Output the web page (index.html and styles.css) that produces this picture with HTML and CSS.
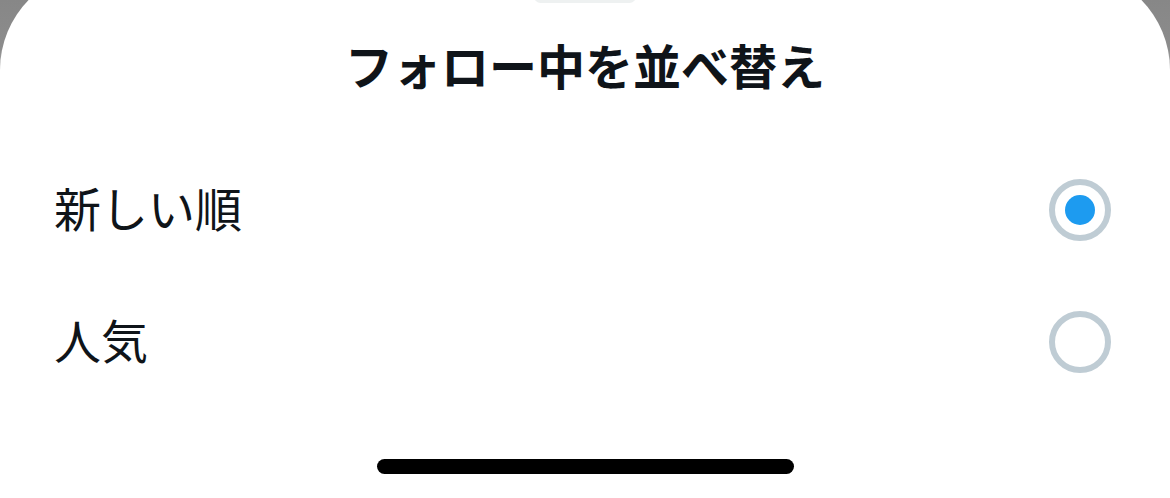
FILE: index.html
```html
<!DOCTYPE html>
<html lang="ja">
<head>
<meta charset="utf-8">
<title>フォロー中を並べ替え</title>
<link rel="stylesheet" href="styles.css">
</head>
<body>
<div class="sheet">
  <div class="handle"></div>
  <h1 class="title">フォロー中を並べ替え</h1>
  <ul class="options">
    <li class="option">
      <span class="label">新しい順</span>
      <span class="radio checked"><span class="dot"></span></span>
    </li>
    <li class="option">
      <span class="label">人気</span>
      <span class="radio"></span>
    </li>
  </ul>
  <div class="home-indicator"></div>
</div>
</body>
</html>
```
FILE: styles.css
```css
html, body {
  margin: 0;
  padding: 0;
}
body {
  width: 1170px;
  height: 498px;
  overflow: hidden;
  background: linear-gradient(to bottom, #878787 0px, #8c8c8c 50px, #ffffff 110px);
  font-family: "Noto Sans CJK JP", "Noto Sans", sans-serif;
  color: #0f1419;
}
.sheet {
  margin-top: -30px;
  height: 528px;
  background: #ffffff;
  border-radius: 100px 100px 0 0;
  display: flex;
  flex-direction: column;
  align-items: stretch;
}
.handle {
  align-self: center;
  margin-top: 20px;
  width: 102px;
  height: 13px;
  border-radius: 7px;
  background: #eef1f1;
}
.title {
  margin: 31px 0 0;
  height: 60px;
  line-height: 60px;
  font-size: 48px;
  font-weight: 700;
  text-align: center;
}
.options {
  list-style: none;
  margin: 50px 0 0;
  padding: 0;
}
.option {
  height: 132px;
  display: flex;
  align-items: center;
  justify-content: space-between;
  padding: 0 59px 0 54px;
}
.label {
  font-size: 47px;
  font-weight: 400;
  line-height: 60px;
  padding-bottom: 6px;
}
.radio {
  box-sizing: border-box;
  width: 62px;
  height: 62px;
  border: 6px solid #bfccd4;
  border-radius: 50%;
  display: flex;
  align-items: center;
  justify-content: center;
}
.dot {
  width: 30px;
  height: 30px;
  border-radius: 50%;
  background: #1d9bf0;
}
.home-indicator {
  align-self: center;
  margin-top: 51px;
  width: 417px;
  height: 15px;
  border-radius: 8px;
  background: #000000;
}
```
